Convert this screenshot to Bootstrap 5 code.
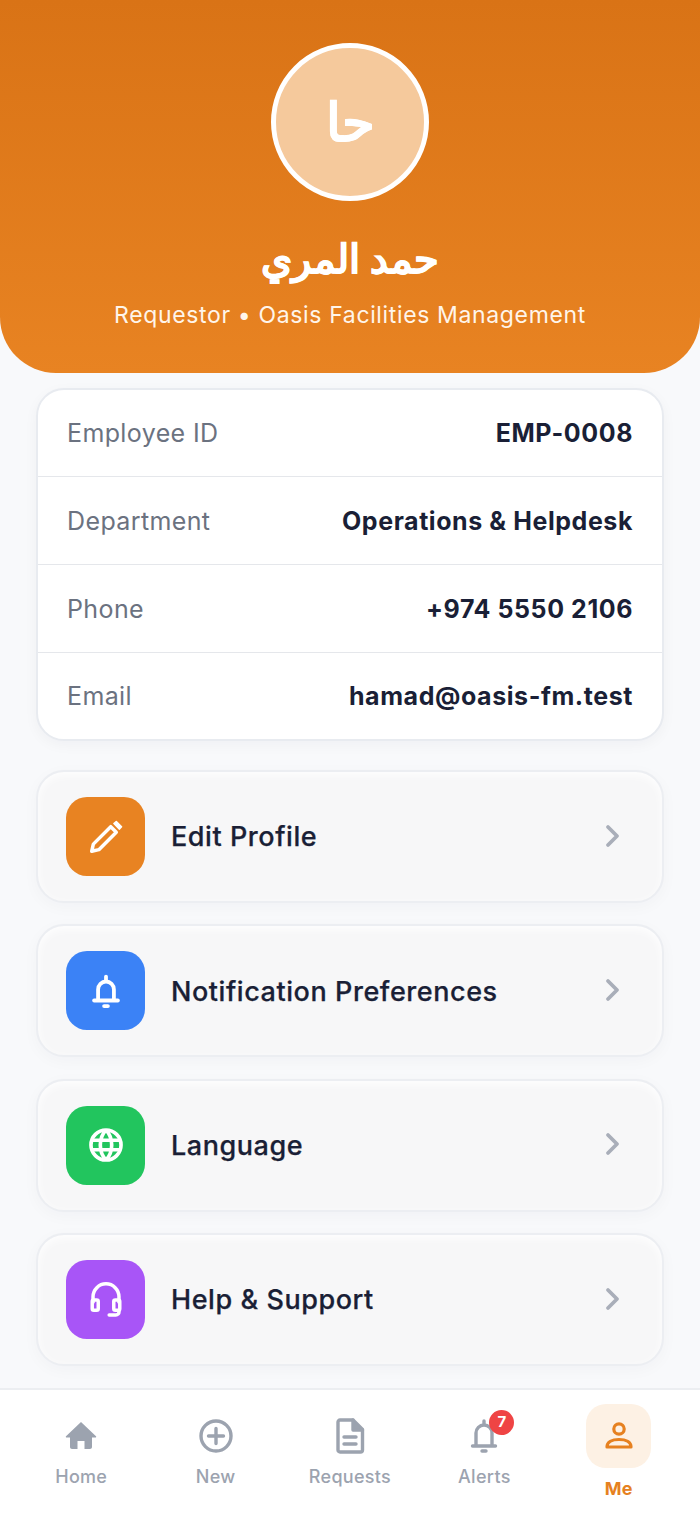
<!DOCTYPE html>
<html lang="en">
<head>
<meta charset="utf-8">
<title>Profile</title>
<link rel="stylesheet" href="https://cdn.jsdelivr.net/npm/bootstrap@5.3.0/dist/css/bootstrap.min.css">
<style>
html,body{height:100%}
body{font-family:Inter,"Noto Sans",sans-serif;background:#f8f9fb;color:#1a1f36;width:700px;height:1515px;overflow:hidden}
.app-shell{height:1515px}
.app-scroll{min-height:0;overflow:hidden}
.hero{height:373px;background:linear-gradient(180deg,#d97316,#e88322);border-radius:0 0 56px 56px;padding-top:43px;color:#fff}
.avatar-ring{width:158px;height:158px;border:5px solid #fff;background:#f5c99c;font-size:53px;font-weight:700;line-height:1;-webkit-text-stroke:.5px #fff}
.hero-name{font-size:40px;font-weight:700;margin:35px 0 0;line-height:46px;-webkit-text-stroke:.6px #fff}
.hero-sub{font-size:23px;letter-spacing:.64px;line-height:32px;margin-top:17px;color:#fff5ea}
.info-box{margin:15px 36px 0;background:#fff;border:2px solid #e8ebf0;border-radius:28px;box-shadow:0 4px 14px rgba(20,30,60,.04)}
.info-line{height:88px;padding:2px 29px 0;border-bottom:1px solid #e5e7eb;font-size:25px}
.info-line:first-child{height:87px}
.info-line:last-child{border-bottom:0;height:86px}
.info-key{color:#6b7280;letter-spacing:.38px}
.info-val{font-weight:700;color:#1a1f36;letter-spacing:.57px}
.menu-stack{margin:29px 36px 0;gap:21.4px}
.menu-item{height:133px;background:#f7f7f8;border:2px solid #eceef2;border-radius:28px;padding:0 35px 0 28px;box-shadow:0 4px 16px rgba(20,30,60,.03),inset 0 3px 10px rgba(255,255,255,.9)}
.menu-ico{width:79px;height:79px;border-radius:21px;color:#fff}
.menu-txt{font-size:27px;font-weight:500;letter-spacing:.56px;margin-left:26px;margin-top:2px;color:#1a1f36;-webkit-text-stroke:.25px #1a1f36}
.chev{color:#a9aeb9;margin-bottom:2px}
.tabbar{height:127px;background:#fff;border-top:2px solid #eceef1;padding:0 14px}
.tab-item{width:134.4px;color:#9ca3af;font-size:18px;font-weight:500;letter-spacing:.3px;padding-top:26px}
.tab-ic{height:40px;margin-bottom:7px}
.tab-on{color:#e68120;font-weight:700;padding-top:14px}
.tab-bg{width:65px;height:64px;border-radius:20px;background:#fdf1e4;margin-bottom:7px}
.count-dot{position:absolute;top:-6px;left:20px;width:25px;height:25px;background:#ef4444;color:#fff;font-size:15px;font-weight:700;border-radius:50%;letter-spacing:0}
</style>
</head>
<body>
<div class="app-shell d-flex flex-column">
  <div class="app-scroll flex-grow-1">
    <header class="hero text-center">
      <div class="avatar-ring rounded-circle d-flex align-items-center justify-content-center mx-auto" dir="rtl">حا</div>
      <h1 class="hero-name" dir="rtl">حمد المري</h1>
      <div class="hero-sub">Requestor • Oasis Facilities Management</div>
    </header>
    <section class="info-box">
      <div class="info-line d-flex justify-content-between align-items-center"><span class="info-key">Employee ID</span><span class="info-val">EMP-0008</span></div>
      <div class="info-line d-flex justify-content-between align-items-center"><span class="info-key">Department</span><span class="info-val">Operations &amp; Helpdesk</span></div>
      <div class="info-line d-flex justify-content-between align-items-center"><span class="info-key">Phone</span><span class="info-val">+974 5550 2106</span></div>
      <div class="info-line d-flex justify-content-between align-items-center"><span class="info-key">Email</span><span class="info-val">hamad@oasis-fm.test</span></div>
    </section>
    <nav class="menu-stack d-flex flex-column">
      <div class="menu-item d-flex align-items-center">
        <span class="menu-ico d-flex align-items-center justify-content-center" style="background:#e88322"><svg width="38" height="38" viewBox="0 0 24 24" fill="none" stroke="currentColor" stroke-width="2.200" stroke-linejoin="round"><path d="M3 21l1-4.500L15 5.500l3.500 3.500L7.500 20z"/><path d="M17 3.500L18.500 2.200l3.300 3.300L20.500 7z" fill="currentColor" stroke-width="1"/></svg></span>
        <span class="menu-txt flex-grow-1">Edit Profile</span>
        <svg class="chev" width="28" height="28" viewBox="0 0 28 28" fill="none" stroke="currentColor" stroke-width="3.800" stroke-linecap="round" stroke-linejoin="round"><path d="M9 5l9 9-9 9"/></svg>
      </div>
      <div class="menu-item d-flex align-items-center">
        <span class="menu-ico d-flex align-items-center justify-content-center" style="background:#3b82f6"><svg width="38" height="38" viewBox="0 0 24 24" fill="none" stroke="currentColor" stroke-width="2.400" stroke-linejoin="round"><path d="M7 17.500v-6.500a5 5 0 0 1 10 0v6.500"/><path d="M4.500 18h15" stroke-linecap="round"/><path d="M12 5V3" stroke-linecap="round"/><path d="M10.800 21.500h2.400" stroke-linecap="round"/></svg></span>
        <span class="menu-txt flex-grow-1">Notification Preferences</span>
        <svg class="chev" width="28" height="28" viewBox="0 0 28 28" fill="none" stroke="currentColor" stroke-width="3.800" stroke-linecap="round" stroke-linejoin="round"><path d="M9 5l9 9-9 9"/></svg>
      </div>
      <div class="menu-item d-flex align-items-center">
        <span class="menu-ico d-flex align-items-center justify-content-center" style="background:#22c55e"><svg width="38" height="38" viewBox="0 0 24 24" fill="none" stroke="currentColor" stroke-width="2.300"><circle cx="12" cy="12" r="9.500"/><path d="M12 2.500c-4.800 5-4.800 14 0 19M12 2.500c4.800 5 4.800 14 0 19M3 9h18M3 15h18"/></svg></span>
        <span class="menu-txt flex-grow-1">Language</span>
        <svg class="chev" width="28" height="28" viewBox="0 0 28 28" fill="none" stroke="currentColor" stroke-width="3.800" stroke-linecap="round" stroke-linejoin="round"><path d="M9 5l9 9-9 9"/></svg>
      </div>
      <div class="menu-item d-flex align-items-center">
        <span class="menu-ico d-flex align-items-center justify-content-center" style="background:#a855f7"><svg width="38" height="38" viewBox="0 0 24 24" fill="none" stroke="currentColor" stroke-width="2.200" stroke-linejoin="round"><path d="M3.800 14v-4a8.200 8.200 0 0 1 16.400 0v4"/><rect x="3.300" y="12" width="3.800" height="6.500" rx="1"/><rect x="16.900" y="12" width="3.800" height="6.500" rx="1"/><path d="M20.200 18.500v1a2 2 0 0 1-2 2H14" stroke-linecap="round"/></svg></span>
        <span class="menu-txt flex-grow-1">Help &amp; Support</span>
        <svg class="chev" width="28" height="28" viewBox="0 0 28 28" fill="none" stroke="currentColor" stroke-width="3.800" stroke-linecap="round" stroke-linejoin="round"><path d="M9 5l9 9-9 9"/></svg>
      </div>
    </nav>
  </div>
  <footer class="tabbar d-flex flex-shrink-0">
    <div class="tab-item d-flex flex-column align-items-center">
      <div class="tab-ic d-flex align-items-center justify-content-center"><svg width="40" height="40" viewBox="0 0 40 40" fill="currentColor"><path d="M20 6L5 20.200c-.5.600-.2 1.300.6 1.300H9V31c0 1.100.9 2 2 2h5.500v-8h7v8H29c1.100 0 2-.9 2-2v-9.500h3.400c.8 0 1.100-.7.600-1.300z"/></svg></div>
      <span>Home</span>
    </div>
    <div class="tab-item d-flex flex-column align-items-center">
      <div class="tab-ic d-flex align-items-center justify-content-center"><svg width="36" height="36" viewBox="0 0 36 36" fill="none" stroke="currentColor" stroke-width="3.400" stroke-linecap="round"><circle cx="18" cy="18" r="15"/><path d="M18 10.500v15M10.500 18h15"/></svg></div>
      <span>New</span>
    </div>
    <div class="tab-item d-flex flex-column align-items-center">
      <div class="tab-ic d-flex align-items-center justify-content-center"><svg width="30" height="36" viewBox="0 0 30 36" fill="none" stroke="currentColor" stroke-width="3.400" stroke-linejoin="round" stroke-linecap="round"><path d="M3 4a2 2 0 0 1 2-2h13l9.500 9.500V32a2 2 0 0 1-2 2H5a2 2 0 0 1-2-2z"/><path d="M18 2v10h9.500" fill="currentColor"/><path d="M9 19h12M9 26h12"/></svg></div>
      <span>Requests</span>
    </div>
    <div class="tab-item d-flex flex-column align-items-center">
      <div class="tab-ic d-flex align-items-center justify-content-center position-relative"><svg width="30" height="36" viewBox="0 0 30 36" fill="none" stroke="currentColor" stroke-width="3.400" stroke-linecap="round" stroke-linejoin="round"><path d="M7 27V15a8 8 0 0 1 16 0v12"/><path d="M3.500 28h23"/><path d="M15 6V3"/><path d="M13 33h4"/></svg><span class="count-dot d-flex align-items-center justify-content-center">7</span></div>
      <span>Alerts</span>
    </div>
    <div class="tab-item tab-on d-flex flex-column align-items-center">
      <div class="tab-bg d-flex align-items-center justify-content-center"><svg width="30" height="30" viewBox="0 0 30 30" fill="none" stroke="currentColor" stroke-width="3.200" stroke-linejoin="round"><circle cx="15" cy="8" r="5.200"/><path d="M3 26c0-5 5-7.500 12-7.500S27 21 27 26z"/></svg></div>
      <span>Me</span>
    </div>
  </footer>
</div>
</body>
</html>
